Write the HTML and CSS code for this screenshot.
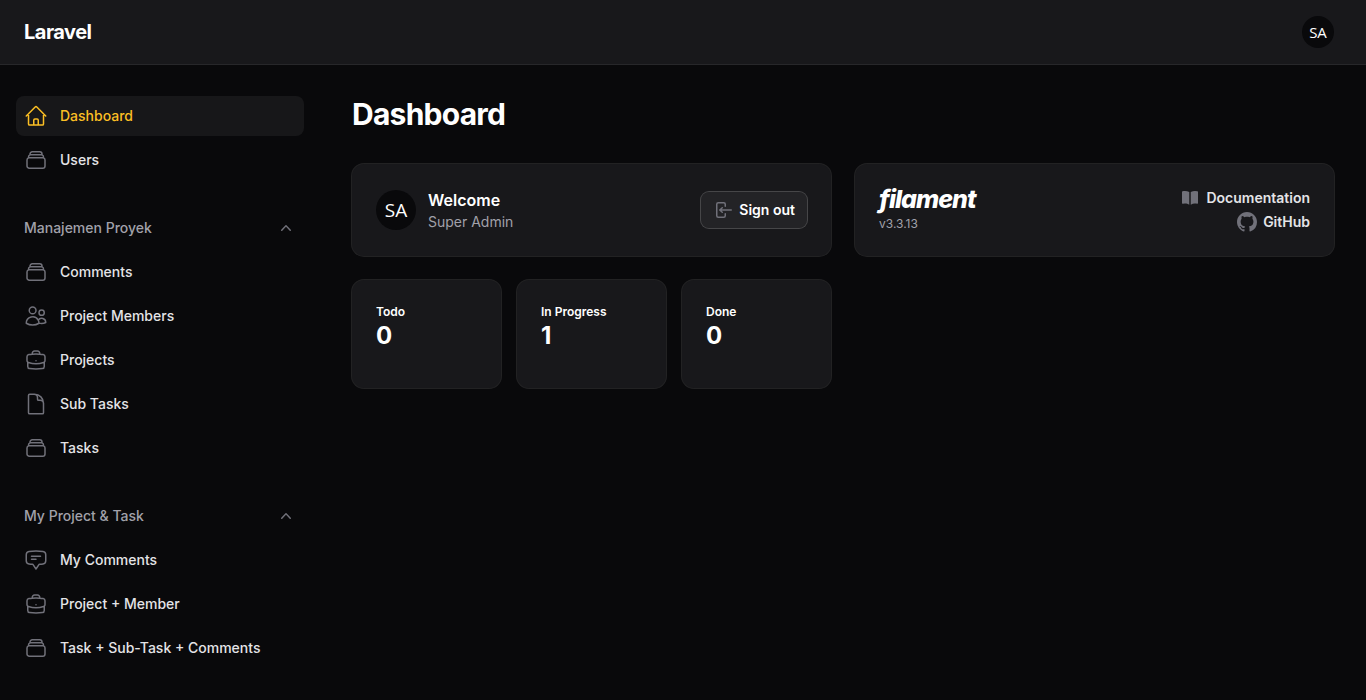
FILE: index.html
```html
<!doctype html>
<html>
	<head>
		<meta charset="utf-8"/>
		<title>Dashboard - Laravel</title>
		<link rel="stylesheet" href="styles.css">
	</head>
	<body>
		<svg class="defs" width="0" height="0">
			<symbol id="i-stack" viewBox="0 0 24 24"><path d="M6 6.878V6a2.25 2.25 0 0 1 2.25-2.25h7.5A2.25 2.25 0 0 1 18 6v.878m-12 0c.235-.083.487-.128.75-.128h10.5c.263 0 .515.045.75.128m-12 0A2.25 2.25 0 0 0 4.5 9v.878m13.5-3A2.25 2.25 0 0 1 19.5 9v.878m0 0a2.246 2.246 0 0 0-.75-.128H5.25c-.263 0-.515.045-.75.128m15 0A2.25 2.25 0 0 1 21 12v6a2.25 2.25 0 0 1-2.25 2.25H5.25A2.25 2.25 0 0 1 3 18v-6c0-.98.626-1.813 1.5-2.122"/></symbol>
			<symbol id="i-home" viewBox="0 0 24 24"><path d="m2.25 12 8.954-8.955c.44-.439 1.152-.439 1.591 0L21.75 12M4.5 9.75v10.125c0 .621.504 1.125 1.125 1.125H9.75v-4.875c0-.621.504-1.125 1.125-1.125h2.25c.621 0 1.125.504 1.125 1.125V21h4.125c.621 0 1.125-.504 1.125-1.125V9.75M8.25 21h8.25"/></symbol>
			<symbol id="i-users" viewBox="0 0 24 24"><path d="M15 19.128a9.38 9.38 0 0 0 2.625.372 9.337 9.337 0 0 0 4.121-.952 4.125 4.125 0 0 0-7.533-2.493M15 19.128v-.003c0-1.113-.285-2.16-.786-3.07M15 19.128v.106A12.318 12.318 0 0 1 8.624 21c-2.331 0-4.512-.645-6.374-1.766l-.001-.109a6.375 6.375 0 0 1 11.964-3.07M12 6.375a3.375 3.375 0 1 1-6.75 0 3.375 3.375 0 0 1 6.75 0Zm8.25 2.25a2.625 2.625 0 1 1-5.25 0 2.625 2.625 0 0 1 5.25 0Z"/></symbol>
			<symbol id="i-briefcase" viewBox="0 0 24 24"><path d="M20.25 14.15v4.25c0 1.094-.787 2.036-1.872 2.18-2.087.277-4.216.42-6.378.42s-4.291-.143-6.378-.42c-1.085-.144-1.872-1.086-1.872-2.18v-4.25m16.5 0a2.18 2.18 0 0 0 .75-1.661V8.706c0-1.081-.768-2.015-1.837-2.175a48.114 48.114 0 0 0-3.413-.387m4.5 8.006c-.194.165-.42.295-.673.38A23.978 23.978 0 0 1 12 15.75c-2.648 0-5.195-.429-7.577-1.22a2.016 2.016 0 0 1-.673-.38m0 0A2.18 2.18 0 0 1 3 12.489V8.706c0-1.081.768-2.015 1.837-2.175a48.111 48.111 0 0 1 3.413-.387m7.5 0V5.25A2.25 2.25 0 0 0 13.5 3h-3a2.25 2.25 0 0 0-2.25 2.25v.894m7.5 0a48.667 48.667 0 0 0-7.5 0M12 12.75h.008v.008H12v-.008Z"/></symbol>
			<symbol id="i-document" viewBox="0 0 24 24"><path d="M19.5 14.25v-2.625a3.375 3.375 0 0 0-3.375-3.375h-1.5A1.125 1.125 0 0 1 13.5 7.125v-1.5a3.375 3.375 0 0 0-3.375-3.375H8.25m2.25 0H5.625c-.621 0-1.125.504-1.125 1.125v17.25c0 .621.504 1.125 1.125 1.125h12.75c.621 0 1.125-.504 1.125-1.125V11.25a9 9 0 0 0-9-9Z"/></symbol>
			<symbol id="i-chat" viewBox="0 0 24 24"><path d="M7.5 8.25h9m-9 3H12m-9.75 1.51c0 1.6 1.123 2.994 2.707 3.227 1.129.166 2.27.293 3.423.379.35.026.67.21.865.501L12 21l2.755-4.133a1.14 1.14 0 0 1 .865-.501 48.172 48.172 0 0 0 3.423-.379c1.584-.233 2.707-1.626 2.707-3.228V6.741c0-1.602-1.123-2.995-2.707-3.228A48.394 48.394 0 0 0 12 3c-2.392 0-4.744.175-7.043.513C3.373 3.746 2.25 5.14 2.25 6.741v6.018Z"/></symbol>
			<symbol id="i-chevron" viewBox="0 0 20 20"><path d="M14.77 12.79a.75.75 0 0 1-1.06-.02L10 8.832 6.29 12.77a.75.75 0 1 1-1.08-1.04l4.25-4.5a.75.75 0 0 1 1.08 0l4.25 4.5a.75.75 0 0 1-.02 1.06z"/></symbol>
		</svg>

		<header class="topbar">
			<span class="brand">Laravel</span>
			<span class="avatar avatar-sm">SA</span>
		</header>

		<div class="layout">
			<aside class="sidebar">
				<nav class="nav-group">
					<a class="nav-item active"><svg class="nav-icon"><use href="#i-home"/></svg>Dashboard</a>
					<a class="nav-item"><svg class="nav-icon"><use href="#i-stack"/></svg>Users</a>
				</nav>

				<nav class="nav-group">
					<div class="group-label">Manajemen Proyek<svg class="chevron"><use href="#i-chevron"/></svg></div>
					<a class="nav-item"><svg class="nav-icon"><use href="#i-stack"/></svg>Comments</a>
					<a class="nav-item"><svg class="nav-icon"><use href="#i-users"/></svg>Project Members</a>
					<a class="nav-item"><svg class="nav-icon"><use href="#i-briefcase"/></svg>Projects</a>
					<a class="nav-item"><svg class="nav-icon"><use href="#i-document"/></svg>Sub Tasks</a>
					<a class="nav-item"><svg class="nav-icon"><use href="#i-stack"/></svg>Tasks</a>
				</nav>

				<nav class="nav-group">
					<div class="group-label">My Project &amp; Task<svg class="chevron"><use href="#i-chevron"/></svg></div>
					<a class="nav-item"><svg class="nav-icon"><use href="#i-chat"/></svg>My Comments</a>
					<a class="nav-item"><svg class="nav-icon"><use href="#i-briefcase"/></svg>Project + Member</a>
					<a class="nav-item"><svg class="nav-icon"><use href="#i-stack"/></svg>Task + Sub-Task + Comments</a>
				</nav>
			</aside>

			<main class="content">
				<h1 class="page-title">Dashboard</h1>

				<div class="widgets">
					<section class="card card-row">
						<span class="avatar avatar-lg">SA</span>
						<div class="welcome">
							<h2 class="welcome-title">Welcome</h2>
							<p class="welcome-name">Super Admin</p>
						</div>
						<a class="btn">
							<svg class="btn-icon" viewBox="0 0 20 20"><path d="M3 4.25A2.25 2.25 0 0 1 5.25 2h5.5A2.25 2.25 0 0 1 13 4.25v2a.75.75 0 0 1-1.5 0v-2a.75.75 0 0 0-.75-.75h-5.5a.75.75 0 0 0-.75.75v11.5c0 .414.336.75.75.75h5.5a.75.75 0 0 0 .75-.75v-2a.75.75 0 0 1 1.5 0v2A2.25 2.25 0 0 1 10.75 18h-5.5A2.25 2.25 0 0 1 3 15.75V4.25Z"/><path d="M19 10a.75.75 0 0 0-.75-.75H8.704l1.048-.943a.75.75 0 1 0-1.004-1.114l-2.5 2.25a.75.75 0 0 0 0 1.114l2.5 2.25a.75.75 0 1 0 1.004-1.114l-1.048-.943h9.546A.75.75 0 0 0 19 10Z"/></svg>
							Sign out
						</a>
					</section>

					<section class="card card-row">
						<div class="about">
							<div class="logo">filament</div>
							<p class="version">v3.3.13</p>
						</div>
						<div class="links">
							<a class="link">
								<svg class="link-icon" viewBox="0 0 20 20"><path d="M10.75 16.82A7.462 7.462 0 0 1 15 15.5c.71 0 1.396.098 2.046.282A.75.75 0 0 0 18 15.06v-11a.75.75 0 0 0-.546-.721A9.006 9.006 0 0 0 15 3a8.963 8.963 0 0 0-4.25 1.065V16.82ZM9.25 4.065A8.963 8.963 0 0 0 5 3c-.85 0-1.673.118-2.454.339A.75.75 0 0 0 2 4.06v11a.75.75 0 0 0 .954.721A7.506 7.506 0 0 1 5 15.5c1.579 0 3.042.487 4.25 1.32V4.065Z"/></svg>
								Documentation
							</a>
							<a class="link">
								<svg class="link-icon" viewBox="0 0 16 16"><path d="M8 0C3.58 0 0 3.58 0 8c0 3.54 2.29 6.53 5.47 7.59.4.07.55-.17.55-.38 0-.19-.01-.82-.01-1.49-2.01.37-2.53-.49-2.69-.94-.09-.23-.48-.94-.82-1.13-.28-.15-.68-.52-.01-.53.63-.01 1.08.58 1.23.82.72 1.21 1.87.87 2.33.66.07-.52.28-.87.51-1.07-1.78-.2-3.64-.89-3.64-3.95 0-.87.31-1.59.82-2.15-.08-.2-.36-1.02.08-2.12 0 0 .67-.21 2.2.82.64-.18 1.32-.27 2-.27.68 0 1.36.09 2 .27 1.53-1.04 2.2-.82 2.2-.82.44 1.1.16 1.92.08 2.12.51.56.82 1.27.82 2.15 0 3.07-1.87 3.75-3.65 3.95.29.25.54.73.54 1.48 0 1.07-.01 1.93-.01 2.2 0 .21.15.46.55.38A8.013 8.013 0 0016 8c0-4.42-3.58-8-8-8z"/></svg>
								GitHub
							</a>
						</div>
					</section>

					<div class="stats">
						<section class="card stat">
							<div class="stat-label">Todo</div>
							<div class="stat-value">0</div>
						</section>
						<section class="card stat">
							<div class="stat-label">In Progress</div>
							<div class="stat-value">1</div>
						</section>
						<section class="card stat">
							<div class="stat-label">Done</div>
							<div class="stat-value">0</div>
						</section>
					</div>
				</div>
			</main>
		</div>
	</body>
</html>
```

FILE: styles.css
```css
*{margin:0;padding:0;box-sizing:border-box;}
html,body{
	height:100%;
}
body{
	background:#09090b;
	color:#fff;
	font-family:Inter,"Liberation Sans",sans-serif;
	font-size:14px;
	line-height:20px;
	overflow:hidden;
}
.defs{
	display:block;
	height:0;
}

/* top bar */
.topbar{
	display:flex;
	align-items:center;
	justify-content:space-between;
	height:65px;
	padding:0 32px 1px 24px;
	background:#18181b;
	border-bottom:1px solid #27272a;
}
.brand{
	font-size:20px;
	line-height:20px;
	font-weight:700;
	letter-spacing:-0.5px;
}
.avatar{
	display:flex;
	align-items:center;
	justify-content:center;
	border-radius:50%;
	background:#09090b;
	font-family:"Open Sans","Noto Sans",sans-serif;
	color:#fff;
}
.avatar-sm{
	width:32px;
	height:32px;
	font-size:15px;
}
.avatar-lg{
	width:40px;
	height:40px;
	font-size:19px;
	flex:none;
}

/* sidebar */
.layout{
	display:flex;
}
.sidebar{
	width:320px;
	flex:none;
	display:flex;
	flex-direction:column;
	gap:28px;
	padding:31px 16px 0;
}
.nav-group{
	display:flex;
	flex-direction:column;
	gap:4px;
}
.nav-item{
	display:flex;
	align-items:center;
	gap:12px;
	height:40px;
	padding:0 8px;
	border-radius:8px;
	font-weight:500;
	color:#e4e4e7;
}
.nav-icon{
	width:24px;
	height:24px;
	flex:none;
	fill:none;
	stroke:#71717a;
	stroke-width:1.5;
	stroke-linecap:round;
	stroke-linejoin:round;
}
.active{
	background:rgba(255,255,255,0.06);
	color:#fbbf24;
}
.active .nav-icon{
	stroke:#fbbf24;
}
.group-label{
	display:flex;
	align-items:center;
	justify-content:space-between;
	height:40px;
	padding:0 8px;
	font-weight:500;
	color:#a1a1aa;
}
.chevron{
	width:20px;
	height:20px;
	fill:#71717a;
}

/* main */
.content{
	flex:1;
	padding:31px 32px 0;
}
.page-title{
	font-size:30px;
	line-height:36px;
	font-weight:700;
	letter-spacing:-0.75px;
	margin-bottom:32px;
}
.widgets{
	display:grid;
	grid-template-columns:1fr 1fr;
	gap:24px;
}
.card{
	background:#18181b;
	border-radius:12px;
	box-shadow:0 0 0 1px rgba(255,255,255,0.1);
}
.card-row{
	display:flex;
	align-items:center;
	gap:12px;
	padding:24px;
}

/* welcome */
.welcome{
	flex:1;
}
.welcome-title{
	font-size:16px;
	line-height:24px;
	font-weight:600;
}
.welcome-name{
	color:#a1a1aa;
}
.btn{
	display:flex;
	align-items:center;
	gap:6px;
	height:36px;
	padding:0 12px;
	border-radius:8px;
	background:rgba(255,255,255,0.05);
	box-shadow:0 0 0 1px rgba(255,255,255,0.2);
	font-weight:600;
}
.btn-icon{
	width:20px;
	height:20px;
	fill:#71717a;
}

/* filament info */
.about{
	flex:1;
}
.logo{
	font-size:25px;
	line-height:20px;
	font-weight:800;
	font-style:italic;
	letter-spacing:-1px;
}
.version{
	margin-top:7px;
	font-size:12px;
	line-height:16px;
	color:#a1a1aa;
}
.links{
	display:flex;
	flex-direction:column;
	align-items:flex-end;
	gap:4px;
}
.link{
	display:flex;
	align-items:center;
	gap:6px;
	font-weight:600;
	color:#e4e4e7;
}
.link-icon{
	width:20px;
	height:20px;
	fill:#71717a;
}

/* stat cards */
.stats{
	display:grid;
	grid-template-columns:repeat(3,1fr);
	gap:16px;
}
.stat{
	min-height:108px;
	padding:24px;
}
.stat-label{
	font-size:12px;
	line-height:16px;
	font-weight:600;
}
.stat-value{
	font-size:24px;
	line-height:32px;
	font-weight:700;
}
```
